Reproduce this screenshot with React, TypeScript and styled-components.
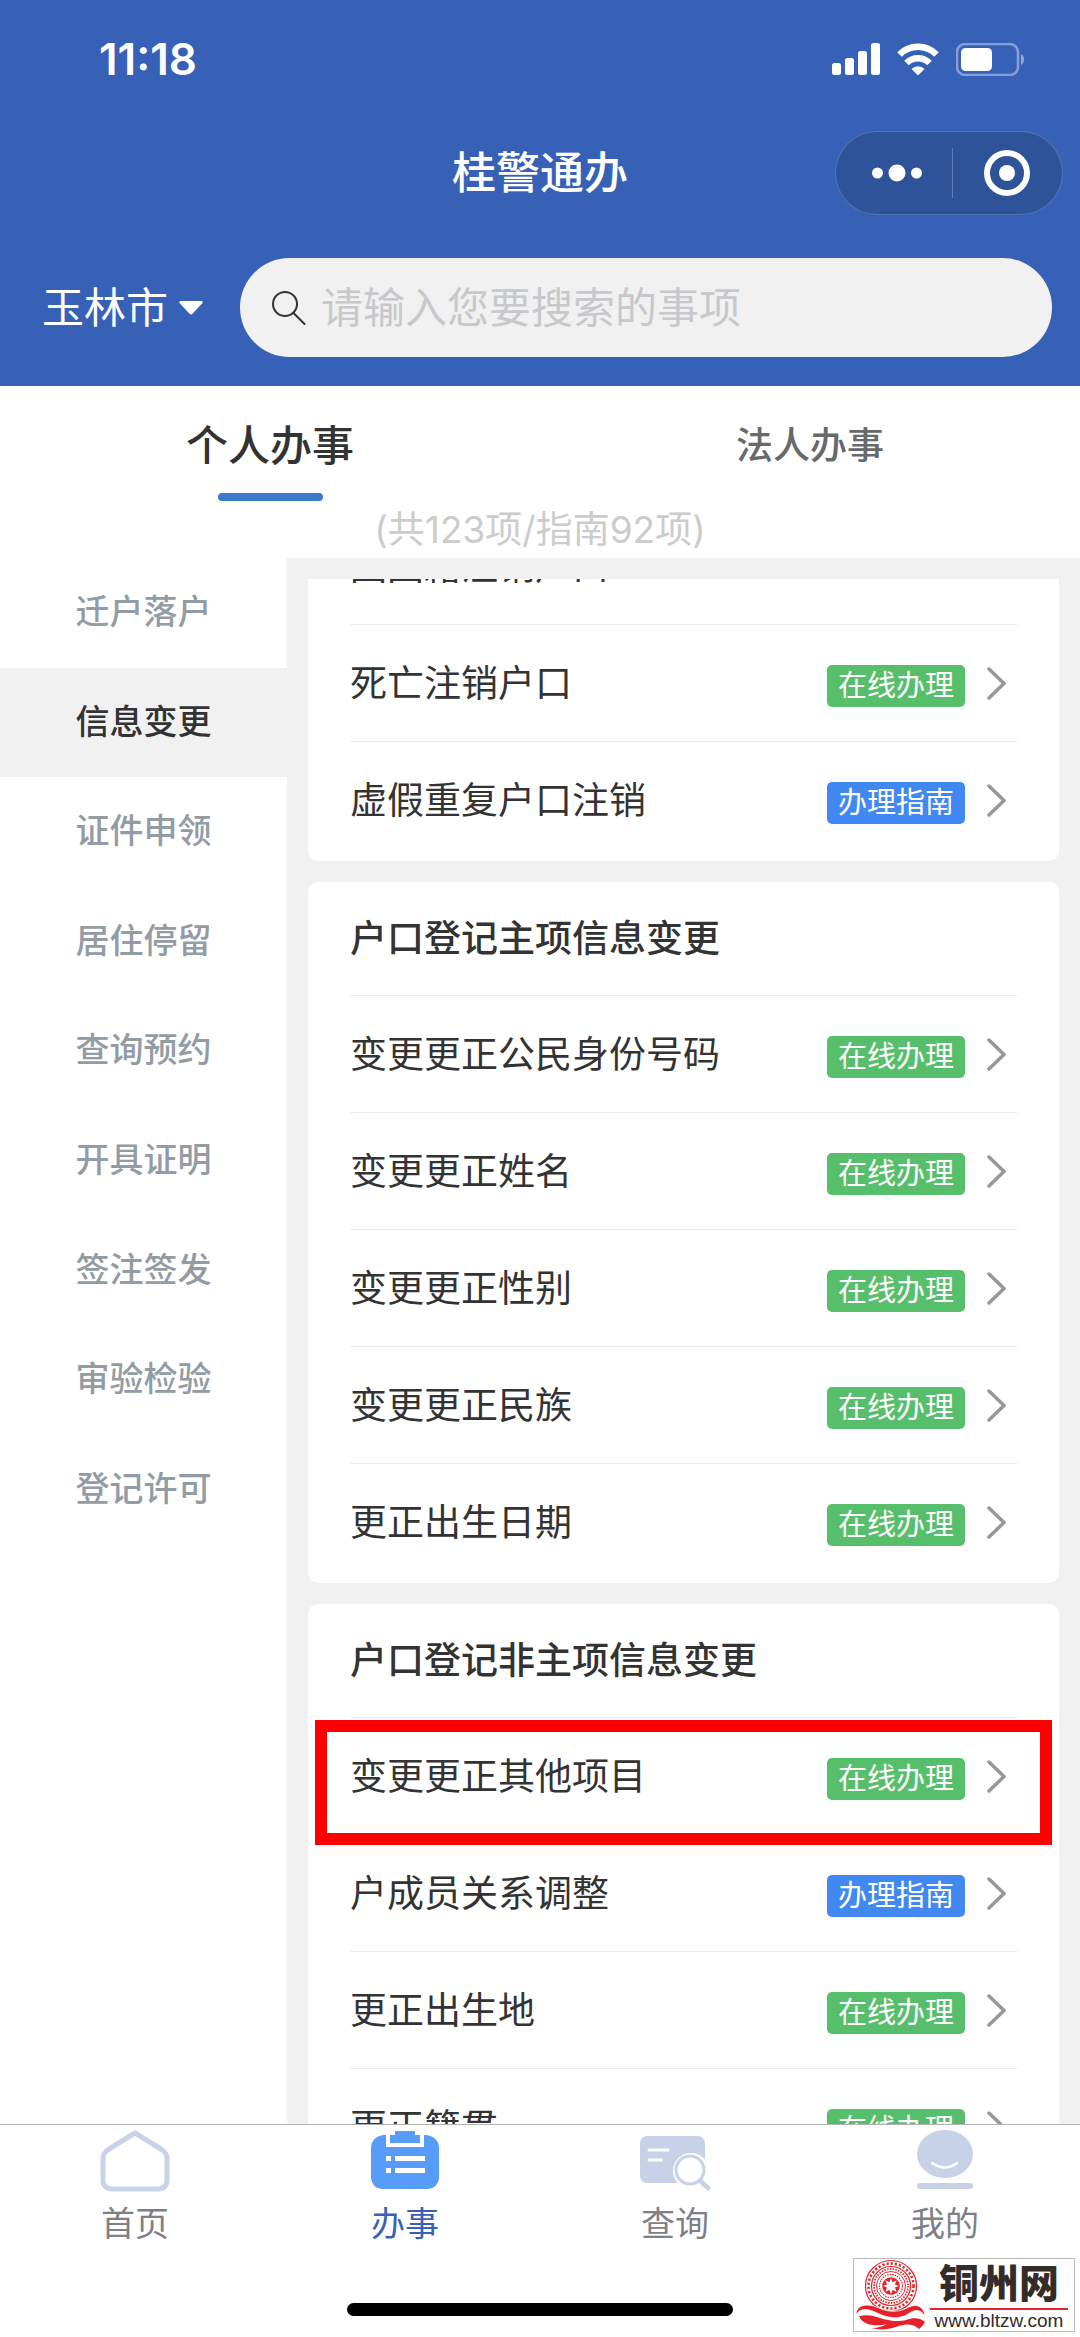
import React, { useLayoutEffect, useRef, useState } from "react";
import styled, { createGlobalStyle, css } from "styled-components";

const GlobalStyle = createGlobalStyle`
  * { box-sizing: border-box; }
  body {
    margin: 0;
    background: #fff;
    color: #333;
    font-family: Inter, "Noto Sans CJK SC", sans-serif;
    font-size: 37px;
  }
  button, input {
    margin: 0;
    padding: 0;
    border: 0;
    background: none;
    color: inherit;
    font: inherit;
  }
  button { cursor: pointer; }
  h1, h2, p, ul { margin: 0; padding: 0; font-weight: inherit; font-size: inherit; }
  ul { list-style: none; }
  svg { display: block; flex: none; }
`;

const Page = styled.div`
  position: relative;
  display: flex;
  flex-direction: column;
  height: 100vh;
  overflow: hidden;
`;

/* ---------- header ---------- */

const Header = styled.header`
  flex: none;
  padding-bottom: 29px;
  background: #3761b7;
  color: #fff;
`;

const StatusBar = styled.div`
  display: flex;
  align-items: center;
  justify-content: space-between;
  height: 118px;
  padding: 0 55px 0 99px;
  font-size: 44px;
  font-weight: 600;
`;

const StatusIcons = styled.div`
  display: flex;
  align-items: center;
  gap: 17px;
`;

const TitleBar = styled.div`
  display: grid;
  grid-template-columns: 1fr auto 1fr;
  align-items: center;
  height: 110px;
  padding: 0 17px;
`;

const AppTitle = styled.h1`
  grid-column: 2;
  font-size: 44px;
  font-weight: 500;
  line-height: 60px;
`;

const Capsule = styled.div`
  display: flex;
  align-items: center;
  justify-self: end;
  width: 228px;
  height: 84px;
  border: 1px solid rgba(255, 255, 255, 0.2);
  border-radius: 42px;
  background: #2e5399;
`;

const CapsuleButton = styled.button`
  display: flex;
  flex: 1;
  align-items: center;
  justify-content: center;
  height: 50px;

  &:first-child {
    padding-left: 6px;
  }

  & + & {
    border-left: 1px solid rgba(255, 255, 255, 0.25);
  }
`;

const SearchBar = styled.div`
  display: flex;
  align-items: center;
  gap: 36px;
  margin-top: 30px;
  padding: 0 28px 0 42px;
`;

const CityButton = styled.button`
  display: flex;
  flex: none;
  align-items: center;
  gap: 10px;
  font-size: 42px;
  line-height: 60px;
`;

const SearchBox = styled.label`
  display: flex;
  flex: 1;
  align-items: center;
  gap: 15px;
  height: 99px;
  padding: 0 32px;
  border-radius: 50px;
  background: #f1f1f1;
`;

const SearchInput = styled.input`
  flex: 1;
  min-width: 0;
  height: 60px;
  outline: none;
  color: #333;
  font-size: 42px;

  &::placeholder {
    color: #c7c8cc;
    opacity: 1;
  }
`;

/* ---------- tabs ---------- */

const Tabs = styled.div`
  display: grid;
  flex: none;
  grid-template-columns: 1fr 1fr;
  height: 115px;
`;

const Tab = styled.button<{ $active: boolean }>`
  display: flex;
  flex-direction: column;
  align-items: center;
  justify-content: flex-end;
  gap: 18px;
  color: ${(p) => (p.$active ? "#333" : "#666a6c")};
  font-size: ${(p) => (p.$active ? "42px" : "37px")};
  font-weight: 500;
  line-height: 58px;

  &::after {
    content: "";
    width: 105px;
    height: 8px;
    border-radius: 4px;
    background: ${(p) => (p.$active ? "#3a7cc9" : "transparent")};
  }
`;

const Summary = styled.p`
  flex: none;
  height: 57px;
  color: #ccc;
  font-size: 37px;
  line-height: 57px;
  text-align: center;
`;

/* ---------- body ---------- */

const Body = styled.div`
  display: flex;
  flex: 1;
  min-height: 0;
`;

const Sidebar = styled.nav`
  display: grid;
  flex: none;
  grid-auto-rows: 1fr;
  width: 287px;
  height: 986px;
`;

const SideItem = styled.button<{ $active: boolean }>`
  padding-bottom: 6px;
  background: ${(p) => (p.$active ? "#f1f1f1" : "transparent")};
  color: ${(p) => (p.$active ? "#333" : "#929ca4")};
  font-size: 34px;
  font-weight: 500;
  text-align: center;
`;

const Content = styled.main`
  display: flex;
  flex: 1;
  flex-direction: column;
  min-width: 0;
  padding: 21px 21px 0;
  background: #f1f1f1;
`;

const Scroller = styled.div`
  display: flex;
  flex: 1;
  flex-direction: column;
  gap: 21px;
  min-height: 0;
  overflow-y: auto;
  scrollbar-width: none;
`;

const Card = styled.section`
  flex: none;
  padding: 0 42px 2px;
  border-radius: 10px;
  background: #fff;
`;

const CardTitle = styled.h2`
  height: 114px;
  font-size: 37px;
  font-weight: 500;
  line-height: 114px;
`;

const RowItem = styled.li`
  position: relative;
`;

const Row = styled.button<{ $divided: boolean }>`
  display: flex;
  align-items: center;
  gap: 22px;
  width: 100%;
  height: 117px;
  padding-right: 11px;
  text-align: left;
  ${(p) =>
    p.$divided &&
    css`
      box-shadow: 0 -1px 0 #ebebeb;
    `}
`;

const RowName = styled.span`
  flex: 1;
  line-height: 56px;
`;

const Badge = styled.span<{ $kind: Kind }>`
  height: 42px;
  margin-top: 5px;
  padding: 0 11px;
  border-radius: 5px;
  background: ${(p) => (p.$kind === "online" ? "#57bf6b" : "#4188f2")};
  color: #fff;
  font-size: 29px;
  line-height: 42px;
`;

const Highlight = styled.span`
  position: absolute;
  inset: 2px -35px -10px;
  z-index: 1;
  border: 12px solid #f00;
  pointer-events: none;
`;

/* ---------- bottom bar ---------- */

const TabBar = styled.nav`
  display: grid;
  flex: none;
  grid-template-columns: repeat(4, 1fr);
  border-top: 1px solid #b2b2b2;
  background: #fff;
`;

const TabBarItem = styled.button<{ $active: boolean }>`
  display: flex;
  flex-direction: column;
  align-items: center;
  gap: 7px;
  padding-top: 4px;
  color: ${(p) => (p.$active ? "#3761b7" : "#7d8085")};
  font-size: 34px;
  line-height: 48px;
`;

const HomeArea = styled.div`
  display: flex;
  flex: none;
  align-items: flex-end;
  justify-content: center;
  height: 89px;
  padding-bottom: 21px;
`;

const HomeIndicator = styled.div`
  width: 386px;
  height: 13px;
  border-radius: 7px;
  background: #000;
`;

const SiteMark = styled.a`
  position: absolute;
  right: 5px;
  bottom: 5px;
  display: flex;
  width: 222px;
  height: 74px;
  border: 1px solid #bbb;
  background: #fff;
  color: #352b29;
  text-decoration: none;
`;

const SiteText = styled.span`
  display: flex;
  flex: 1;
  flex-direction: column;
  align-items: center;
  padding-right: 6px;
`;

const SiteName = styled.span`
  display: flex;
  align-self: stretch;
  justify-content: center;
  height: 51px;
  border-bottom: 2px solid #e6212a;
  font-size: 40px;
  font-weight: 900;
  line-height: 49px;
`;

const SiteUrl = styled.span`
  font-family: "Liberation Sans", Arial, sans-serif;
  font-size: 19px;
  line-height: 21px;
`;

/* ---------- icons ---------- */

const SignalIcon = () => (
  <svg width="48" height="32" viewBox="0 0 48 32" fill="#fff">
    <rect x="0" y="20" width="9" height="12" rx="2.5" />
    <rect x="13" y="15" width="9" height="17" rx="2.5" />
    <rect x="26" y="8" width="9" height="24" rx="2.5" />
    <rect x="39" y="0" width="9" height="32" rx="2.5" />
  </svg>
);

const WifiIcon = () => (
  <svg width="42" height="32" viewBox="0 0 42 32" fill="none" stroke="#fff" strokeWidth="6.500">
    <path d="M2.500 11.500A26 26 0 0 1 39.500 11.500" />
    <path d="M9.500 20A16.500 16.500 0 0 1 32.500 20" />
    <path d="M14.500 26A9 9 0 0 1 27.500 26L21 32.500Z" fill="#fff" stroke="none" />
  </svg>
);

const BatteryIcon = () => (
  <svg width="69" height="33" viewBox="0 0 69 33">
    <rect x="1" y="1" width="61" height="31" rx="8" fill="none" stroke="#fff" strokeOpacity="0.4" strokeWidth="2.500" />
    <rect x="5" y="5" width="31" height="23" rx="4.500" fill="#fff" />
    <path d="M65 11c4 2 4 9 0 11z" fill="#fff" fillOpacity="0.45" />
  </svg>
);

const MoreIcon = () => (
  <svg width="50" height="18" viewBox="0 0 50 18" fill="#fff">
    <circle cx="5.500" cy="9" r="5.500" />
    <circle cx="25" cy="9" r="8.500" />
    <circle cx="44.500" cy="9" r="5.500" />
  </svg>
);

const TargetIcon = () => (
  <svg width="46" height="46" viewBox="0 0 46 46">
    <circle cx="23" cy="23" r="20" fill="none" stroke="#fff" strokeWidth="6" />
    <circle cx="23" cy="23" r="8" fill="#fff" />
  </svg>
);

const CaretIcon = () => (
  <svg width="26" height="16" viewBox="0 0 26 16">
    <path d="M3 1H23Q26 1 24 3.500L14.500 13.800Q13 15 11.500 13.800L2 3.500Q0 1 3 1Z" fill="#fff" />
  </svg>
);

const SearchIcon = () => (
  <svg width="34" height="34" viewBox="0 0 34 34" fill="none" stroke="#333" strokeWidth="2" strokeLinecap="round">
    <circle cx="13" cy="13" r="12" />
    <path d="M21.500 22L32.500 33" />
  </svg>
);

const ChevronIcon = () => (
  <svg width="19" height="33" viewBox="0 0 19 33" fill="none" stroke="#979797" strokeWidth="3.500" strokeLinecap="round">
    <path d="M2 2L17 16.500L2 31" />
  </svg>
);

const HomeIcon = () => (
  <svg width="72" height="64" viewBox="0 0 72 64" fill="none" stroke="#c8d3e9" strokeWidth="5" strokeLinejoin="round">
    <path d="M36 4L62 20Q68 24 68 29V53Q67 59 60 60H12Q5 59 4 53V29Q4 24 10 20Z" />
  </svg>
);

const TaskIcon = () => (
  <svg width="72" height="64" viewBox="0 0 72 64">
    <path d="M14 6H17V18H55V6H58Q69 8 70 18V49Q69 59 59 60H13Q3 59 2 49V18Q3 8 14 6Z" fill="#579cf9" />
    <path d="M26 2H46V6H51V14H21V6H26Z" fill="#579cf9" />
    <path d="M17 27H22V32H17ZM26 27H56V32H26ZM17 39H22V44H17ZM26 39H56V44H26Z" fill="#fff" />
  </svg>
);

const QueryIcon = () => (
  <svg width="72" height="64" viewBox="0 0 72 64">
    <rect x="1" y="7" width="65" height="47" rx="7" fill="#c7d2e8" />
    <path d="M10 21H29M10 31H22" stroke="#fff" strokeWidth="3" strokeLinecap="round" />
    <circle cx="52" cy="42" r="18" fill="#fff" />
    <path d="M64 53L71 60" stroke="#fff" strokeWidth="9" />
    <circle cx="51" cy="41" r="14" fill="#fff" stroke="#c7d2e8" strokeWidth="3" />
    <path d="M61.500 52L69 59" stroke="#c7d2e8" strokeWidth="4.500" strokeLinecap="round" />
  </svg>
);

const MineIcon = () => (
  <svg width="72" height="64" viewBox="0 0 72 64" fill="none" strokeLinecap="round">
    <ellipse cx="36" cy="25" rx="28" ry="24" fill="#c7d2e8" />
    <path d="M23 34Q36 43 48 34" stroke="#fff" strokeWidth="2.500" />
    <path d="M11 57H61" stroke="#c7d2e8" strokeWidth="6" />
  </svg>
);

const DrumIcon = () => (
  <svg width="76" height="72" viewBox="0 0 76 72" fill="none" stroke="#e6212a">
    <circle cx="37" cy="27" r="25.500" strokeWidth="1.200" />
    <circle cx="37" cy="27" r="22.500" strokeWidth="2.500" strokeDasharray="2.200 2" />
    <circle cx="37" cy="27" r="19.500" strokeWidth="1.200" />
    <circle cx="37" cy="27" r="17" strokeWidth="1.800" strokeDasharray="1.500 1.300" />
    <circle cx="37" cy="27" r="14.500" strokeWidth="1" />
    <circle cx="37" cy="27" r="11.500" strokeWidth="1.200" strokeDasharray="1.500 1" />
    <circle cx="37" cy="27" r="8.800" fill="#e6212a" stroke="none" />
    <path
      d="M37 19L38.600 23.200L42.700 21.300L40.900 25.400L45 27L40.900 28.600L42.700 32.700L38.600 30.900L37 35L35.400 30.900L31.300 32.700L33.100 28.600L29 27L33.100 25.400L31.300 21.300L35.400 23.200Z"
      fill="#fff"
      stroke="none"
    />
    <path
      d="M2 56C2 45 14 44 25 49C36 54 46 53 55 48C63 44 70 48 71 57C66 50 61 50 54 55C45 61 33 59 23 54C13 49 6 49 2 56Z"
      fill="#e6212a"
      stroke="#fff"
      strokeWidth="0.800"
    />
    <path
      d="M5 57C14 55 20 57 29 60C38 62 44 63 52 61C60 58 67 59 71 63C69 67 67 68 65 70C58 64 50 65 42 68C33 71 25 71 17 69C25 69 29 67 33 65C25 67 9 68 5 57Z"
      fill="#e6212a"
      stroke="none"
    />
  </svg>
);

/* ---------- data ---------- */

type Kind = "online" | "guide";
type Service = { name: string; kind?: Kind; marked?: boolean };
type Group = { title?: string; services: Service[] };

const badgeText: Record<Kind, string> = { online: "在线办理", guide: "办理指南" };

const categories = [
  "迁户落户",
  "信息变更",
  "证件申领",
  "居住停留",
  "查询预约",
  "开具证明",
  "签注签发",
  "审验检验",
  "登记许可",
];

const groups: Group[] = [
  {
    services: [
      { name: "回国籍注销户口" },
      { name: "死亡注销户口", kind: "online" },
      { name: "虚假重复户口注销", kind: "guide" },
    ],
  },
  {
    title: "户口登记主项信息变更",
    services: [
      { name: "变更更正公民身份号码", kind: "online" },
      { name: "变更更正姓名", kind: "online" },
      { name: "变更更正性别", kind: "online" },
      { name: "变更更正民族", kind: "online" },
      { name: "更正出生日期", kind: "online" },
    ],
  },
  {
    title: "户口登记非主项信息变更",
    services: [
      { name: "变更更正其他项目", kind: "online", marked: true },
      { name: "户成员关系调整", kind: "guide" },
      { name: "更正出生地", kind: "online" },
      { name: "更正籍贯", kind: "online" },
    ],
  },
];

const sections = [
  { label: "首页", Icon: HomeIcon },
  { label: "办事", Icon: TaskIcon },
  { label: "查询", Icon: QueryIcon },
  { label: "我的", Icon: MineIcon },
];

const INITIAL_SCROLL = 71;

export default function App() {
  const [tab, setTab] = useState("个人办事");
  const [category, setCategory] = useState("信息变更");
  const scroller = useRef<HTMLDivElement>(null);

  useLayoutEffect(() => {
    if (scroller.current) scroller.current.scrollTop = INITIAL_SCROLL;
  }, []);

  return (
    <>
      <GlobalStyle />
      <Page>
        <Header>
          <StatusBar>
            <span>11:18</span>
            <StatusIcons>
              <SignalIcon />
              <WifiIcon />
              <BatteryIcon />
            </StatusIcons>
          </StatusBar>
          <TitleBar>
            <AppTitle>桂警通办</AppTitle>
            <Capsule>
              <CapsuleButton aria-label="更多">
                <MoreIcon />
              </CapsuleButton>
              <CapsuleButton aria-label="关闭">
                <TargetIcon />
              </CapsuleButton>
            </Capsule>
          </TitleBar>
          <SearchBar>
            <CityButton>
              玉林市
              <CaretIcon />
            </CityButton>
            <SearchBox>
              <SearchIcon />
              <SearchInput type="text" aria-label="搜索" placeholder="请输入您要搜索的事项" />
            </SearchBox>
          </SearchBar>
        </Header>

        <Tabs>
          {["个人办事", "法人办事"].map((name) => (
            <Tab key={name} $active={name === tab} onClick={() => setTab(name)}>
              {name}
            </Tab>
          ))}
        </Tabs>
        <Summary>(共123项/指南92项)</Summary>

        <Body>
          <Sidebar>
            {categories.map((name) => (
              <SideItem key={name} $active={name === category} onClick={() => setCategory(name)}>
                {name}
              </SideItem>
            ))}
          </Sidebar>
          <Content>
            <Scroller ref={scroller}>
              {groups.map((group, g) => (
                <Card key={g}>
                  {group.title && <CardTitle>{group.title}</CardTitle>}
                  <ul>
                    {group.services.map(({ name, kind, marked }, i) => (
                      <RowItem key={name}>
                        <Row $divided={i > 0 || Boolean(group.title)}>
                          <RowName>{name}</RowName>
                          {kind && <Badge $kind={kind}>{badgeText[kind]}</Badge>}
                          {kind && <ChevronIcon />}
                        </Row>
                        {marked && <Highlight />}
                      </RowItem>
                    ))}
                  </ul>
                </Card>
              ))}
            </Scroller>
          </Content>
        </Body>

        <TabBar>
          {sections.map(({ label, Icon }) => (
            <TabBarItem key={label} $active={label === "办事"}>
              <Icon />
              {label}
            </TabBarItem>
          ))}
        </TabBar>
        <HomeArea>
          <HomeIndicator />
        </HomeArea>

        <SiteMark href="#">
          <DrumIcon />
          <SiteText>
            <SiteName>铜州网</SiteName>
            <SiteUrl>www.bltzw.com</SiteUrl>
          </SiteText>
        </SiteMark>
      </Page>
    </>
  );
}
